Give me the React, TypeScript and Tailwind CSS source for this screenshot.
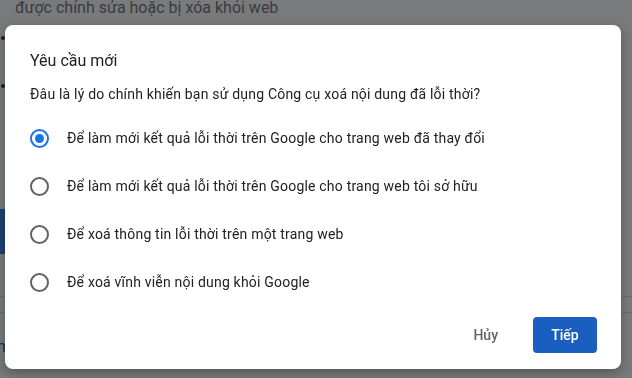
import { useState } from 'react'

const options = [
  'Để làm mới kết quả lỗi thời trên Google cho trang web đã thay đổi',
  'Để làm mới kết quả lỗi thời trên Google cho trang web tôi sở hữu',
  'Để xoá thông tin lỗi thời trên một trang web',
  'Để xoá vĩnh viễn nội dung khỏi Google',
]

function Radio({ checked }: { checked: boolean }) {
  return (
    <span
      className={
        checked
          ? 'flex h-[19px] w-[19px] shrink-0 items-center justify-center rounded-full border-2 border-[#1a73e8]'
          : 'flex h-[19px] w-[19px] shrink-0 items-center justify-center rounded-full border-2 border-[#5f6368]'
      }
    >
      {checked && <span className="h-[9px] w-[9px] rounded-full bg-[#1a73e8]" />}
    </span>
  )
}

export default function App() {
  const [selected, setSelected] = useState(0)

  return (
    <div className="relative h-[378px] w-[632px] overflow-hidden bg-white font-['Roboto','Liberation_Sans',sans-serif]">
      {/* page behind the dialog */}
      <p className="-mt-[4px] pl-[15px] text-[16px] leading-6 text-[#5f6368]">
        được chỉnh sửa hoặc bị xóa khỏi web
      </p>
      <div className="ml-[1px] mt-[16px] h-[4px] w-[4px] rounded-full bg-[#202124]" />
      <div className="ml-[1px] mt-[44px] h-[4px] w-[4px] rounded-full bg-[#202124]" />
      <div className="-ml-[30px] mt-[121px] h-[45px] w-[40px] rounded bg-[#1a73e8]" />
      <div className="mt-[42px] border-t border-[#dadce0]" />
      <div className="mt-[15px] border-t border-[#dadce0]" />
      <p className="-ml-[3px] mt-[22px] text-[16px] leading-6 text-[#1a3a5e]">n</p>

      {/* scrim + dialog */}
      <div className="fixed inset-0 bg-[rgba(32,33,36,0.6)] pl-[5px] pt-[25px]">
        <div className="flex h-[344px] w-[616px] flex-col rounded-lg bg-white pl-[25px] pr-[24px] pt-[24px] shadow-[0_4px_12px_rgba(0,0,0,0.3)]">
          <h2 className="text-[16px] leading-6 text-[#202124]">Yêu cầu mới</h2>
          <p className="mt-[11px] text-[14px] leading-5 tracking-[0.2px] text-[#202124]">
            Đâu là lý do chính khiến bạn sử dụng Công cụ xoá nội dung đã lỗi thời?
          </p>
          <div className="mt-[10px] flex flex-col">
            {options.map((label, i) => (
              <label
                key={label}
                onClick={() => setSelected(i)}
                className="flex h-12 cursor-pointer items-center gap-[18px] text-[14px] leading-5 tracking-[0.2px] text-[#202124]"
              >
                <Radio checked={selected === i} />
                <span>{label}</span>
              </label>
            ))}
          </div>
          <div className="mt-[11px] flex justify-end gap-[23px]">
            <button type="button" className="h-9 rounded px-3 text-[14px] font-medium text-[#5f6368]">
              Hủy
            </button>
            <button type="button" className="h-9 w-16 rounded bg-[#1a5fc0] text-[14px] font-medium text-white">
              Tiếp
            </button>
          </div>
        </div>
      </div>
    </div>
  )
}
